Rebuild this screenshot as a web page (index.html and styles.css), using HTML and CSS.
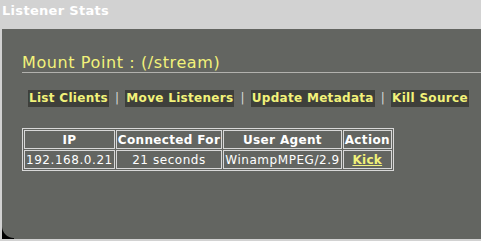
FILE: index.html
```html
<!DOCTYPE html>
<html>
<head>
<meta charset="utf-8">
<link rel="stylesheet" href="styles.css">
</head>
<body>
<h2 class="title">Listener Stats</h2>
<div class="panel">
  <h3 class="mount">Mount Point : (/stream)</h3>
  <div class="links">
    <a class="lnk" href="#">List Clients</a><span class="sep">|</span><a class="lnk" href="#">Move Listeners</a><span class="sep">|</span><a class="lnk" href="#">Update Metadata</a><span class="sep">|</span><a class="lnk" href="#">Kill Source</a>
  </div>
  <table class="stats">
    <tr><th>IP</th><th>Connected For</th><th>User Agent</th><th>Action</th></tr>
    <tr><td>192.168.0.21</td><td class="center">21 seconds</td><td>WinampMPEG/2.9</td><td class="center"><a class="kick" href="#">Kick</a></td></tr>
  </table>
  <div class="corner"></div>
</div>
</body>
</html>
```
FILE: styles.css
```css
html, body {
  margin: 0;
  padding: 0;
  background: #d2d2d2;
  font-family: "DejaVu Sans", Verdana, sans-serif;
}
.title {
  margin: 0;
  height: 29px;
  box-sizing: border-box;
  padding: 3px 0 0 2px;
  font-size: 13px;
  letter-spacing: 0.3px;
  font-weight: bold;
  color: #ffffff;
}
.panel {
  position: relative;
  margin-left: 2px;
  height: 210px;
  background: #636561;
  padding: 25px 0 0 20px;
  box-sizing: border-box;
}
.mount {
  margin: 0;
  font-size: 16px;
  letter-spacing: 0.6px;
  font-weight: normal;
  color: #f2f27a;
  border-bottom: 1px solid #b2b2ae;
  line-height: 18px;
}
.links {
  margin-top: 17px;
  margin-left: 6px;
  font-size: 12px;
  letter-spacing: 0.3px;
  font-weight: bold;
  line-height: 17px;
  display: flex;
  align-items: center;
}
.lnk {
  background: #3e3f3b;
  color: #f2f27a;
  text-decoration: none;
  padding: 0 1px;
}
.sep {
  color: #d8d8d8;
  font-weight: normal;
  margin: 0 6px;
}
.stats {
  margin-top: 21px;
  border: 1px solid #d8d8d8;
  border-spacing: 1px;
  color: #ffffff;
  font-size: 12px;
}
.stats th, .stats td {
  border: 1px solid #d8d8d8;
  padding: 1px 1px;
  height: 15px;
}
.stats th {
  font-weight: bold;
  letter-spacing: 0.35px;
  text-align: center;
}
.stats td {
  letter-spacing: 0.55px;
}
.center { text-align: center; }
.kick {
  color: #f2f27a;
  font-weight: bold;
  letter-spacing: 0.3px;
}
.corner {
  position: absolute;
  left: 0;
  bottom: 0;
  width: 12px;
  height: 13px;
  background: radial-gradient(circle at 100% 0, transparent 11.5px, #000 12.5px);
}
```
